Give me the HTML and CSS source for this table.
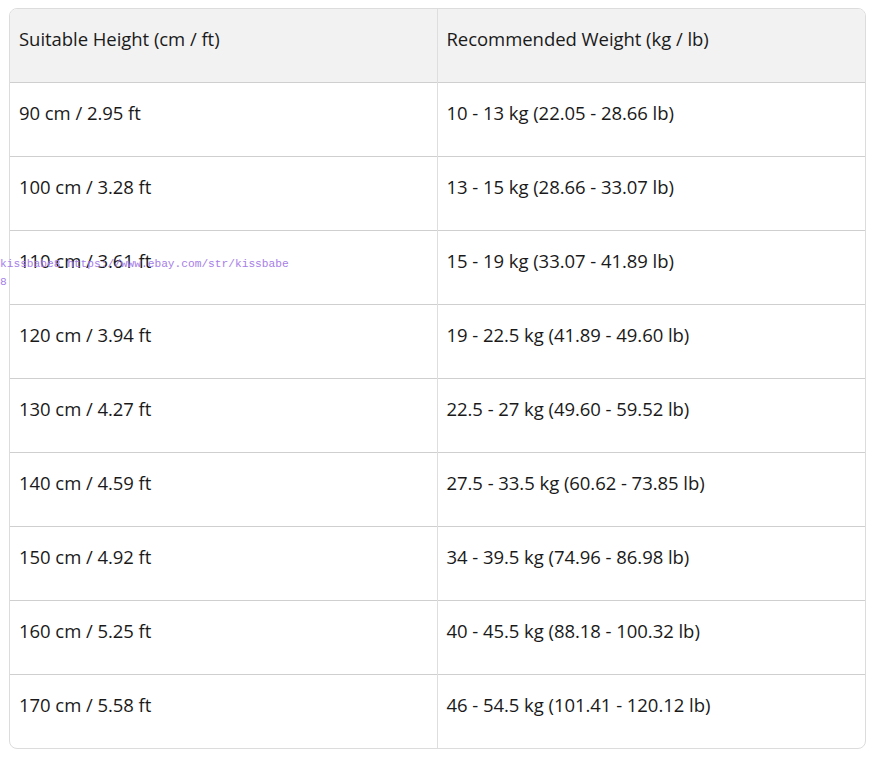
FILE: index.html
```html
<!DOCTYPE html>
<html>
<head>
<meta charset="utf-8">
<link rel="stylesheet" href="styles.css">
</head>
<body>
<div class="page">
  <div class="table-wrap">
    <table class="size-table">
      <thead>
        <tr><th>Suitable Height (cm / ft)</th><th>Recommended Weight (kg / lb)</th></tr>
      </thead>
      <tbody>
        <tr><td>90 cm / 2.95 ft</td><td>10 - 13 kg (22.05 - 28.66 lb)</td></tr>
        <tr><td>100 cm / 3.28 ft</td><td>13 - 15 kg (28.66 - 33.07 lb)</td></tr>
        <tr><td>110 cm / 3.61 ft</td><td>15 - 19 kg (33.07 - 41.89 lb)</td></tr>
        <tr><td>120 cm / 3.94 ft</td><td>19 - 22.5 kg (41.89 - 49.60 lb)</td></tr>
        <tr><td>130 cm / 4.27 ft</td><td>22.5 - 27 kg (49.60 - 59.52 lb)</td></tr>
        <tr><td>140 cm / 4.59 ft</td><td>27.5 - 33.5 kg (60.62 - 73.85 lb)</td></tr>
        <tr><td>150 cm / 4.92 ft</td><td>34 - 39.5 kg (74.96 - 86.98 lb)</td></tr>
        <tr><td>160 cm / 5.25 ft</td><td>40 - 45.5 kg (88.18 - 100.32 lb)</td></tr>
        <tr><td>170 cm / 5.58 ft</td><td>46 - 54.5 kg (101.41 - 120.12 lb)</td></tr>
      </tbody>
    </table>
  </div>
  <div class="watermark">kissbabe8 https://www.ebay.com/str/kissbabe 8</div>
</div>
</body>
</html>
```
FILE: styles.css
```css
html, body {
  margin: 0;
  padding: 0;
  background: #ffffff;
}
.page {
  position: relative;
  width: 878px;
  height: 764px;
  padding: 8px 12px 0 9px;
  box-sizing: border-box;
}
.table-wrap {
  border: 1px solid #dcdcdc;
  border-radius: 8px;
  overflow: hidden;
  width: 857px;
  box-sizing: border-box;
}
.size-table {
  width: 100%;
  border-collapse: collapse;
  font-family: "Open Sans", "Noto Sans", sans-serif;
  font-size: 18.5px;
  letter-spacing: -0.05px;
  color: #1a1a1a;
  table-layout: fixed;
}
.size-table th,
.size-table td {
  text-align: left;
  vertical-align: top;
  height: 74px;
  padding: 17px 10px 0 9px;
  box-sizing: border-box;
  font-weight: 400;
  line-height: 26px;
}
.size-table th {
  height: 73px;
  background: #f2f2f2;
}
.size-table th:first-child,
.size-table td:first-child {
  width: 427px;
  border-right: 1px solid #dedede;
}
.size-table td {
  border-top: 1px solid #cfcfcf;
}
.watermark {
  position: absolute;
  left: 0;
  top: 255px;
  width: 296px;
  font-family: "Liberation Mono", monospace;
  font-size: 11.2px;
  line-height: 18px;
  color: #a67ee8;
}
```
